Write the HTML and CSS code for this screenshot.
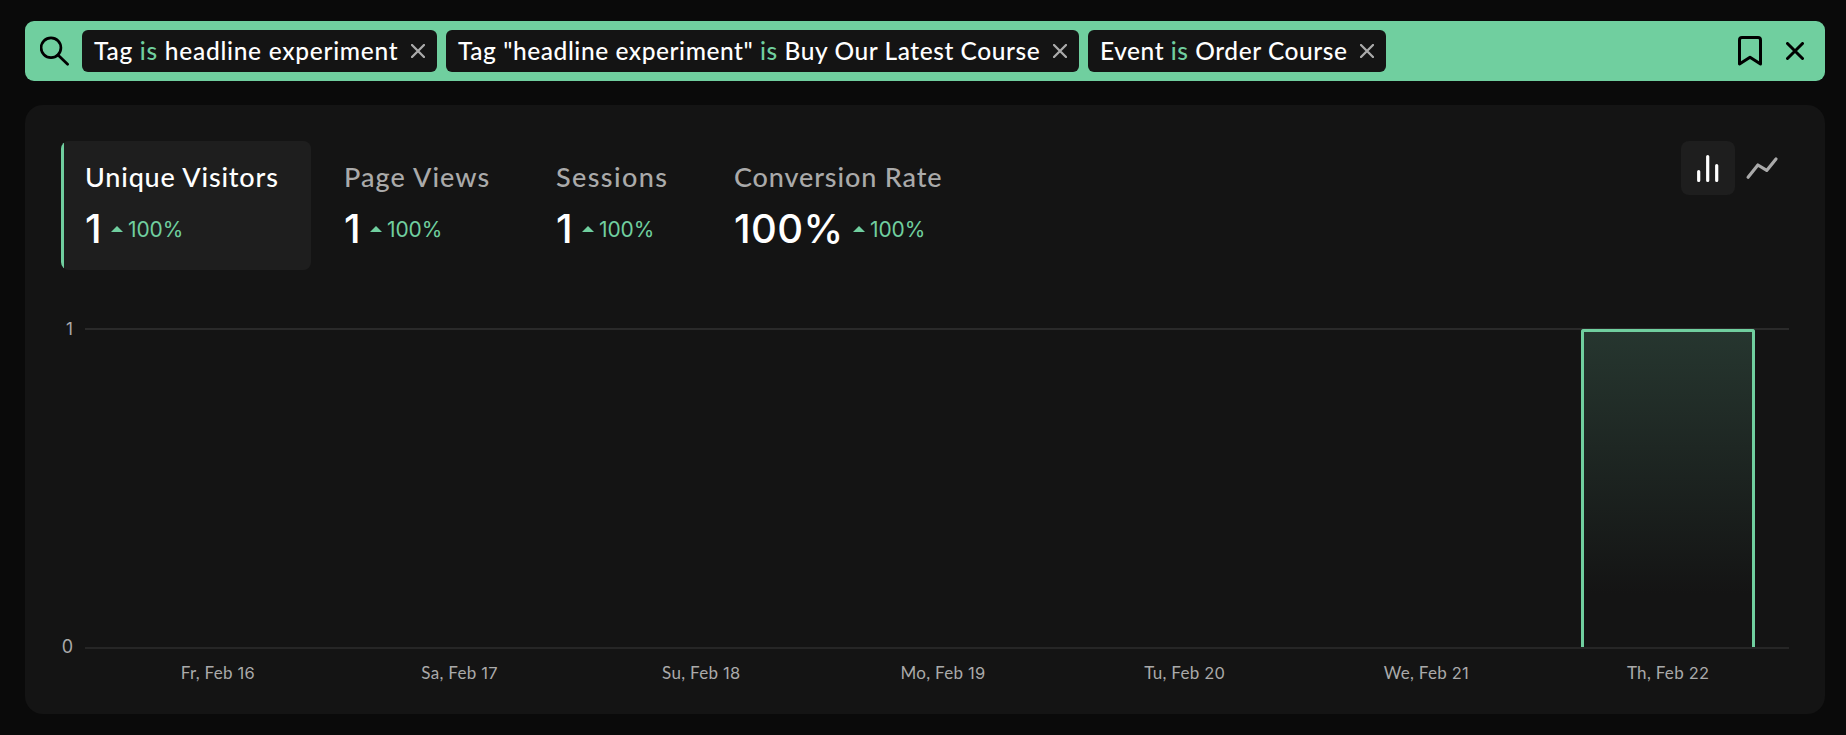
FILE: index.html
```html
<!DOCTYPE html>
<html lang="en">
<head>
<meta charset="utf-8">
<title>Analytics</title>
<link rel="stylesheet" href="styles.css">
</head>
<body>
<header class="filters">
  <svg class="search" viewBox="0 0 30 30"><circle cx="11" cy="11.8" r="9.9"/><path d="M18 19l9.6 9.2"/></svg>
  <div class="chip chip-a"><span class="chip-text">Tag <em>is</em> headline experiment</span><svg class="remove" viewBox="0 0 14 14"><path d="M1 1l12 12M13 1L1 13"/></svg></div>
  <div class="chip chip-b"><span class="chip-text">Tag "headline experiment" <em>is</em> Buy Our Latest Course</span><svg class="remove" viewBox="0 0 14 14"><path d="M1 1l12 12M13 1L1 13"/></svg></div>
  <div class="chip chip-c"><span class="chip-text">Event <em>is</em> Order Course</span><svg class="remove" viewBox="0 0 14 14"><path d="M1 1l12 12M13 1L1 13"/></svg></div>
  <svg class="bookmark" viewBox="0 0 24 30"><path d="M1.5 28V4q0-2.5 2.5-2.5h16q2.5 0 2.5 2.5v24L12 21.2z"/></svg>
  <svg class="clear" viewBox="0 0 18 18"><path d="M1.5 1.5l15 15M16.5 1.5l-15 15"/></svg>
</header>
<main class="panel">
  <div class="top">
    <section class="metric active"><h2 class="label l1">Unique Visitors</h2><div class="values"><span class="num one">1</span><i class="up"></i><span class="pct">100%</span></div></section>
    <section class="metric m2"><h2 class="label l2">Page Views</h2><div class="values"><span class="num one">1</span><i class="up"></i><span class="pct">100%</span></div></section>
    <section class="metric m3"><h2 class="label l3">Sessions</h2><div class="values"><span class="num one">1</span><i class="up"></i><span class="pct">100%</span></div></section>
    <section class="metric m4"><h2 class="label l4">Conversion Rate</h2><div class="values"><span class="num full">100%</span><i class="up"></i><span class="pct">100%</span></div></section>
    <div class="toggle">
      <button class="mode on"><svg viewBox="0 0 54 54"><path d="M17.7 30.5v9M26.7 15.6v23.9M35.7 24.5v15"/></svg></button>
      <button class="mode"><svg viewBox="0 0 54 54"><path d="M13.1 36.2l9.8-12.2 8.8 5.4 9.3-11.5"/></svg></button>
    </div>
  </div>
  <div class="chart">
    <div class="scale"><span>1</span><span class="zero">0</span></div>
    <div class="plot">
      <div class="slots"><div></div><div></div><div></div><div></div><div></div><div></div><div class="slot"><div class="bar"></div></div></div>
    </div>
    <div class="days"><span>Fr, Feb <b>16</b></span><span>Sa, Feb <b>17</b></span><span>Su, Feb <b>18</b></span><span>Mo, Feb <b>19</b></span><span>Tu, Feb <b>20</b></span><span>We, Feb <b>21</b></span><span>Th, Feb <b>22</b></span></div>
  </div>
</main>
</body>
</html>
```
FILE: styles.css
```css
* { box-sizing: border-box; }
body { margin: 0; padding: 21px 21px 21px 25px; height: 735px; overflow: hidden; background: #0a0a0a; color: #fff; font-family: Lato, "Open Sans", sans-serif; }
svg { fill: none; stroke: currentColor; stroke-linecap: round; stroke-linejoin: round; flex: none; display: block; }

.filters { width: 1800px; height: 60px; border-radius: 9px; background: #70cf9f; color: #000; display: flex; align-items: center; padding: 0 21px 0 14.5px; }
.search { width: 30px; height: 30px; stroke-width: 2.7; margin-right: 12.5px; }
.chip { height: 42px; border-radius: 6px; background: #141414; color: #fff; display: flex; align-items: center; justify-content: space-between; padding: 0 12px; margin-right: 9px; white-space: nowrap; font-size: 24.5px; font-weight: 500; line-height: 42px; }
.chip em { font-style: normal; color: #70cf9f; }
.chip-a { width: 355px; letter-spacing: .72px; }
.chip-b { width: 633px; letter-spacing: .56px; }
.chip-c { width: 298px; letter-spacing: .55px; }
.remove { width: 14px; height: 14px; color: #aaa; stroke-width: 2.3; }
.bookmark { width: 24px; height: 30px; stroke-width: 3; margin-left: auto; }
.clear { width: 18px; height: 18px; stroke-width: 3; margin-left: 24px; }

.panel { width: 1800px; height: 609px; margin-top: 24px; border-radius: 18px; background: #141414; padding: 36px; }
.top { display: flex; height: 129px; }
.metric { height: 129px; padding-top: 19px; }
.active { width: 250px; padding-left: 24px; border-radius: 8px; background: linear-gradient(90deg, #70cf9f 3px, #1e1e1e 3px); }
.m2 { width: 212px; margin-left: 33px; }
.m3 { width: 178px; }
.m4 { width: 240px; }
.label { margin: 0; font-size: 27px; line-height: 34px; font-weight: 500; color: #aaa; white-space: nowrap; }
.l1 { letter-spacing: .82px; }
.l2 { letter-spacing: 1.1px; }
.l3 { letter-spacing: 1.4px; }
.l4 { letter-spacing: .87px; }
.active .label { color: #fff; }
.values { display: flex; align-items: center; height: 50px; margin-top: 10px; font-family: Inter, sans-serif; }
.num { font-size: 40px; font-weight: 500; line-height: 50px; }
.one { width: 26px; }
.full { width: 119px; letter-spacing: .4px; }
.up { border: 6px solid transparent; border-top: 0; border-bottom-color: #70cf9f; margin-right: 5px; }
.pct { font-size: 21px; color: #70cf9f; letter-spacing: -.1px; }
.toggle { display: flex; margin-left: auto; }
.mode { width: 54px; height: 54px; border: 0; border-radius: 8px; padding: 0; background: none; color: #aaa; }
.mode svg { width: 54px; height: 54px; stroke-width: 3.2; }
.on { background: #1e1e1e; color: #fff; }

.chart { display: grid; grid-template: 321px 44px / 24px 1704px; margin-top: 58px; color: #aaa; font-size: 17px; }
.scale { display: flex; flex-direction: column; justify-content: space-between; margin: -9px 12px -9px 0; line-height: 21px; text-align: right; font-family: Inter, sans-serif; }
.zero { font-size: 18px; line-height: 23px; }
.plot { border-top: 2px solid #2a2a2a; border-bottom: 2px solid #262626; }
.slots { display: grid; grid-template-columns: repeat(7, 1fr); height: 100%; margin-left: 12px; }
.slot { display: flex; justify-content: center; }
.bar { width: 174px; height: 318px; margin-top: -1px; border: 3px solid #70cf9f; border-bottom: 0; border-radius: 3px 3px 0 0; background: linear-gradient(#26362f, #141414 83%); }
.days { grid-column: 2; display: grid; grid-template-columns: repeat(7, 1fr); margin-left: 12px; padding-top: 13px; text-align: center; line-height: 22px; letter-spacing: .3px; }
.days b { font-family: Inter, sans-serif; font-weight: 400; font-size: 16.5px; }
```
